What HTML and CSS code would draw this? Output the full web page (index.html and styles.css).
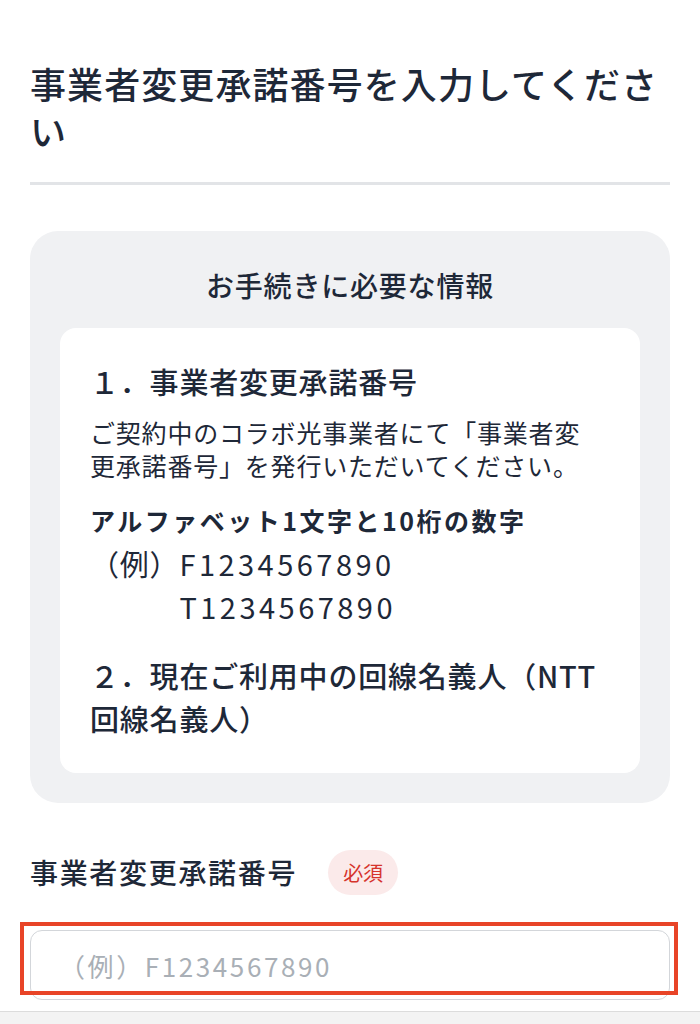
FILE: index.html
```html
<!DOCTYPE html>
<html lang="ja">
<head>
<meta charset="utf-8">
<title>事業者変更承諾番号を入力してください</title>
<link rel="stylesheet" href="styles.css">
</head>
<body>
<main class="page">
  <h1 class="title">事業者変更承諾番号を入力してください</h1>
  <hr class="divider">
  <section class="info">
    <h2 class="info-title">お手続きに必要な情報</h2>
    <div class="card">
      <h3 class="item-head">１．事業者変更承諾番号</h3>
      <p class="body">ご契約中のコラボ光事業者にて「事業者変更承諾番号」を発行いただいてください。</p>
      <p class="bold">アルファベット1文字と10桁の数字</p>
      <div class="example">
        <span class="ex-label">（例）</span>
        <span class="ex-values"><span>F1234567890</span><span>T1234567890</span></span>
      </div>
      <h3 class="item-head item-two">２．現在ご利用中の回線名義人（NTT回線名義人）</h3>
    </div>
  </section>
  <div class="field-row">
    <label class="field-label" for="code">事業者変更承諾番号</label>
    <span class="badge">必須</span>
  </div>
  <div class="input-wrap">
    <input class="input" id="code" type="text" placeholder="（例）F1234567890">
    <span class="highlight"></span>
  </div>
</main>
<div class="bottom-bar"></div>
</body>
</html>
```

FILE: styles.css
```css
* { box-sizing: border-box; }
html, body { margin: 0; padding: 0; background: #ffffff; }
body {
  font-family: "Noto Sans CJK JP", "Noto Sans", sans-serif;
  color: #1e2838;
  letter-spacing: 0.05em;
  height: 1024px;
  overflow: hidden;
  display: flex;
  flex-direction: column;
}
.page {
  padding: 60px 30px 0;
  flex: 1;
}
.title {
  margin: 0;
  font-size: 36px;
  font-weight: 500;
  line-height: 47px;
  letter-spacing: 0.03em;
}
.divider {
  margin: 28px 0 0;
  border: 0;
  height: 3px;
  background: #e2e4e7;
}
.info {
  margin-top: 46px;
  background: #f0f1f3;
  border-radius: 28px;
  padding: 34px 30px 30px;
}
.info-title {
  margin: 0;
  text-align: center;
  font-size: 28px;
  font-weight: 500;
  line-height: 40px;
}
.card {
  margin-top: 23px;
  background: #ffffff;
  border-radius: 16px;
  padding: 33px 20px 33px 30px;
}
.item-head {
  margin: 0;
  font-size: 29px;
  font-weight: 500;
  line-height: 40px;
}
.body {
  margin: 15px 0 0;
  font-size: 25px;
  line-height: 33px;
  padding-right: 30px;
}
.bold {
  margin: 21px 0 0;
  font-size: 25px;
  font-weight: 700;
  line-height: 34px;
  letter-spacing: 0.1em;
}
.example {
  margin-top: 5px;
  display: flex;
  font-size: 29px;
  line-height: 43px;
}
.ex-values {
  display: flex;
  flex-direction: column;
  letter-spacing: 0.12em;
}
.item-two {
  margin-top: 26px;
  line-height: 43px;
}
.field-row {
  margin-top: 47px;
  display: flex;
  align-items: center;
  gap: 31px;
}
.field-label {
  font-size: 28px;
  font-weight: 500;
  line-height: 45px;
  letter-spacing: 0.06em;
}
.badge {
  width: 70px;
  height: 45px;
  border-radius: 23px;
  background: #fbeaea;
  color: #d6342c;
  font-size: 20px;
  display: flex;
  align-items: center;
  justify-content: center;
  letter-spacing: 0;
}
.input-wrap {
  position: relative;
  margin-top: 35px;
}
.input {
  display: block;
  width: 100%;
  height: 70px;
  border: 1.5px solid #d3d6da;
  border-radius: 12px;
  padding: 0 28px;
  font-family: "Noto Sans CJK JP", "Noto Sans", sans-serif;
  font-size: 26px;
  letter-spacing: 0.1em;
  color: #1e2838;
  background: #ffffff;
  outline: none;
}
.input::placeholder { color: #a9afb6; }
.highlight {
  position: absolute;
  left: -10px;
  right: -8px;
  top: -8px;
  bottom: 5px;
  border: 4px solid #e84427;
  pointer-events: none;
}
.bottom-bar {
  height: 13px;
  flex: none;
  background: #f3f3f3;
  border-top: 1px solid #dcdcdc;
}
```
